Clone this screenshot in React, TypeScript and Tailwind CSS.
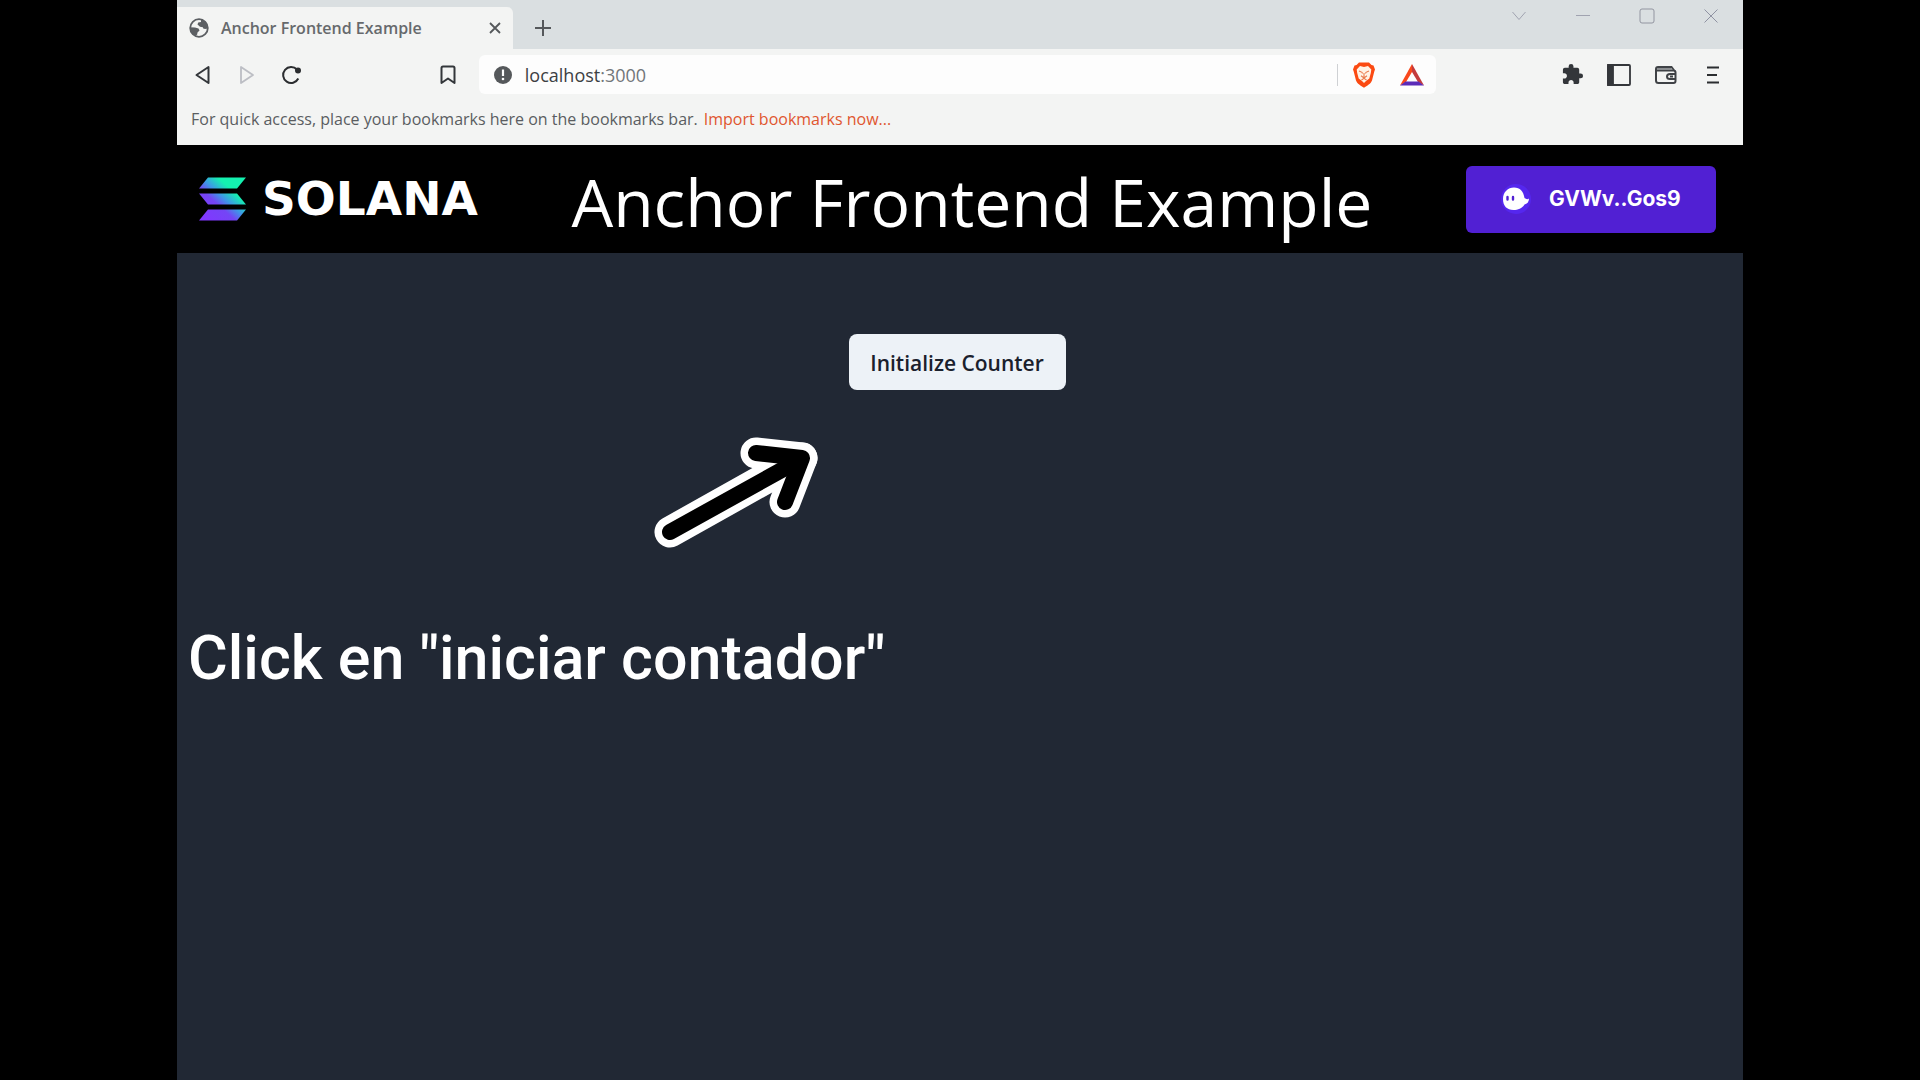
import type { ReactNode } from "react";
import { MdExtension } from "react-icons/md";

function IconButton({ label, className = "", children }: { label: string; className?: string; children: ReactNode }) {
  return (
    <button type="button" aria-label={label} className={`flex h-6 w-6 shrink-0 items-center justify-center ${className}`}>
      {children}
    </button>
  );
}

function GlobeIcon() {
  return (
    <svg width="20" height="20" viewBox="0 0 20 20" className="shrink-0">
      <circle cx="10" cy="10" r="8.8" fill="none" stroke="#5c5f63" strokeWidth="1.8" />
      <path d="M12 1.4C15.5 2 18.3 4.700 18.8 8.500L17.500 11L14.500 10.800L13.800 9.300L11 8.800L8.500 6.500L9.200 4.500L12 4Z" fill="#5c5f63" />
      <path d="M1.200 9.200L6 9.500L9.500 10.500L10.500 12.500L8.500 14.500L8.200 16.500L6.500 17.900C3.500 16.500 1.200 13.500 1.200 9.200Z" fill="#5c5f63" />
    </svg>
  );
}

function TabStrip() {
  return (
    <div className="flex h-[49px] items-start justify-between bg-[#dadfe1]">
      <div className="flex">
        <div className="mt-[7px] flex h-[42px] w-[336px] items-center rounded-tr-md bg-[#f3f4f3] pr-[6px] pl-3">
          <GlobeIcon />
          <span className="ml-3 flex-1 text-[16px] leading-6 font-semibold whitespace-nowrap text-[#66696c]">Anchor Frontend Example</span>
          <IconButton label="Close tab">
            <svg width="12" height="12" viewBox="0 0 12 12" stroke="#55585b" strokeWidth="1.8">
              <path d="M1 1L11 11M11 1L1 11" />
            </svg>
          </IconButton>
        </div>
        <IconButton label="New tab" className="mt-4 ml-[18px]">
          <svg width="16" height="16" viewBox="0 0 16 16" stroke="#55585b" strokeWidth="2">
            <path d="M8 0V16M0 8H16" />
          </svg>
        </IconButton>
      </div>
      <div className="mt-1 mr-5 flex gap-10">
        <IconButton label="Search tabs">
          <svg width="14" height="14" viewBox="0 0 14 14" fill="none" stroke="#a0a3b0">
            <path d="M0.500 3L7 10.500L13.500 3" />
          </svg>
        </IconButton>
        <IconButton label="Minimize">
          <svg width="14" height="14" viewBox="0 0 14 14" stroke="#a0a3b0">
            <path d="M0 6.500H14" />
          </svg>
        </IconButton>
        <IconButton label="Maximize">
          <svg width="16" height="16" viewBox="0 0 16 16" fill="none" stroke="#9295a0">
            <rect x="1" y="1" width="14" height="14" rx="2" />
          </svg>
        </IconButton>
        <IconButton label="Close">
          <svg width="14" height="14" viewBox="0 0 14 14" stroke="#8f92a2">
            <path d="M0.500 0.500L13.500 13.500M13.500 0.500L0.500 13.500" />
          </svg>
        </IconButton>
      </div>
    </div>
  );
}

function BraveIcon() {
  return (
    <svg width="22" height="26" viewBox="0 0 22 26">
      <path d="M6 0.500H16L18.500 3L20.500 3.500L22 7.500L21.300 9.500L19 18.500C18 21.500 14 24 11 25.700C8 24 4 21.500 3 18.500L0.700 9.500L0 7.500L1.500 3.500L3.500 3Z" fill="#fb4a12" />
      <path d="M7 4L11 5L15 4L18.300 7.500L17.800 11L16.300 16.500L13 19L11 21L9 19L5.700 16.500L4.200 11L3.700 7.500Z" fill="#fff3e6" />
      <path d="M6 9L9 10.300L9.500 11.500M16 9L13 10.300L12.500 11.500M11 11V15M8 13.800L11 16L14 13.800M8.500 18L11 16.300L13.500 18" fill="none" stroke="#ea7a4c" strokeWidth="1.100" />
    </svg>
  );
}

function RewardsIcon() {
  return (
    <svg width="24" height="22" viewBox="0 0 24 22">
      <path d="M12 0L0 21.500L6 18L12 8Z" fill="#f9481c" />
      <path d="M12 0L24 21.500L18 18L12 8Z" fill="#c43a3c" />
      <path d="M0 21.500H24L18.500 17.500H5.500Z" fill="#5b2bb8" />
    </svg>
  );
}

function Toolbar() {
  return (
    <div className="flex h-[51px] items-center justify-between pr-[18px] pl-[14px]">
      <div className="flex items-center">
        <IconButton label="Back">
          <svg width="16" height="20" viewBox="0 0 16 20" fill="none" stroke="#33363a" strokeWidth="2" strokeLinejoin="round">
            <path d="M13.500 2V18L1.500 10Z" />
          </svg>
        </IconButton>
        <IconButton label="Forward" className="ml-5">
          <svg width="16" height="20" viewBox="0 0 16 20" fill="none" stroke="#bcbec4" strokeWidth="1.800" strokeLinejoin="round">
            <path d="M2 2V18L14 10Z" />
          </svg>
        </IconButton>
        <IconButton label="Reload" className="ml-5">
          <svg width="22" height="20" viewBox="0 0 22 20" fill="none" stroke="#2b2d30" strokeWidth="2">
            <path d="M17 4.500A8 8 0 1 0 18.300 13.500" />
            <circle cx="18" cy="5.500" r="3" fill="#2b2d30" stroke="none" />
          </svg>
        </IconButton>
      </div>
      <IconButton label="Bookmark this tab" className="ml-auto">
        <svg width="16" height="20" viewBox="0 0 16 20" fill="none" stroke="#33363a" strokeWidth="2" strokeLinejoin="round">
          <path d="M1.500 3Q1.500 1.500 3 1.500H13Q14.500 1.500 14.500 3V18L8 13.500L1.500 18Z" />
        </svg>
      </IconButton>
      <div className="ml-[19px] flex h-[39px] w-[62.4%] items-center rounded-md bg-[#fdfdfd] pr-3 pl-[15px]">
        <svg width="18" height="18" viewBox="0 0 18 18" className="shrink-0">
          <circle cx="9" cy="9" r="9" fill="#55585b" />
          <path d="M9 3.500V10" stroke="#fdfdfd" strokeWidth="2.200" />
          <circle cx="9" cy="13" r="1.300" fill="#fdfdfd" />
        </svg>
        <div className="ml-[13px] flex-1 text-[18px] leading-6 text-[#3c4043]">
          localhost<span className="text-[#72767a]">:3000</span>
        </div>
        <div className="mr-[14px] h-[22px] w-px bg-[#cfd1d4]" />
        <IconButton label="Brave Shields" className="mr-6">
          <BraveIcon />
        </IconButton>
        <IconButton label="Brave Rewards">
          <RewardsIcon />
        </IconButton>
      </div>
      <div className="ml-[124px] flex items-center gap-[23px]">
        <IconButton label="Extensions">
          <MdExtension size={23} color="#33363a" />
        </IconButton>
        <IconButton label="Sidebar">
          <svg width="24" height="22" viewBox="0 0 24 22" fill="none" stroke="#33363a" strokeWidth="1.800">
            <rect x="1" y="1" width="22" height="20" rx="1" />
            <path d="M1 1H6V21H1Z" fill="#33363a" />
          </svg>
        </IconButton>
        <IconButton label="Wallet">
          <svg width="24" height="20" viewBox="0 0 24 20" fill="none" stroke="#3f4246" strokeWidth="2">
            <path d="M2 5V15.500Q2 18 4.500 18H19.500Q21.500 18 21.500 16V7.500Q21.500 5.500 19.500 5.500H2V4Q2 2 4 2H17.500L21 6.500" />
            <path d="M3 3H17L19 5H3Z" fill="#8a8d90" stroke="none" />
            <path d="M22 9H16Q13 9 13 11.500Q13 14 16 14H22M16 11.500H19" />
          </svg>
        </IconButton>
        <IconButton label="Menu">
          <svg width="14" height="18" viewBox="0 0 14 18" stroke="#2b2d30" strokeWidth="2">
            <path d="M1 1.500H13M1 9H11M1 16.500H13" />
          </svg>
        </IconButton>
      </div>
    </div>
  );
}

function SolanaLogo() {
  return (
    <a href="/" className="flex items-center gap-4 text-white" aria-label="Solana">
      <svg width="47" height="44" viewBox="0 0 47 44">
        <defs>
          <linearGradient id="solana" gradientUnits="userSpaceOnUse" x1="42" y1="4" x2="8" y2="42">
            <stop offset="0.250" stopColor="#14f1b0" />
            <stop offset="0.480" stopColor="#3f95e8" />
            <stop offset="0.650" stopColor="#7445f5" />
            <stop offset="1" stopColor="#8038ff" />
          </linearGradient>
        </defs>
        <g fill="url(#solana)">
          <path d="M9 0.500H47L38 11.500H0Z" />
          <path d="M0 16.500H38L47 27.500H9Z" />
          <path d="M9 32.500H47L38 43.500H0Z" />
        </g>
      </svg>
      <span className="font-['DejaVu_Sans',sans-serif] text-[47px] leading-[52px] font-bold">SOLANA</span>
    </a>
  );
}

function WalletButton() {
  return (
    <button
      type="button"
      className="flex h-[67px] w-[250px] items-center gap-[18px] rounded-md bg-[#5120d3] pl-[35px] font-['Inter',sans-serif] text-[21px] font-bold text-white"
    >
      <svg width="30" height="32" viewBox="0 0 30 32">
        <circle cx="15" cy="16" r="15" fill="#5527ee" />
        <path d="M2 16C2 9 7 4.500 13 4.500C19 4.500 22.500 8.500 23.500 15Q26 17 28 15.500C28 19 26 21 23.500 21.500C21 25.500 17 27 12.500 27C6 27 2 23 2 16Z" fill="#fff" />
        <path d="M6.500 14V16.500M12 14V16.500" stroke="#5120d3" strokeWidth="2.400" strokeLinecap="round" />
      </svg>
      GVWv..Gos9
    </button>
  );
}

function PointerArrow() {
  return (
    <svg width="164" height="114" viewBox="0 0 164 114" className="mt-[46px] ml-[477px]" fill="none" strokeLinecap="round" strokeLinejoin="round" aria-hidden="true">
      <g stroke="#fff" strokeWidth="31">
        <path d="M16 96L148 22" />
        <path d="M102 17L148 22L131 66" />
      </g>
      <g stroke="#000" strokeWidth="16">
        <path d="M16 96L144 25" />
        <path d="M102 17L148 22L131 66" />
        <path d="M128 28L142 26L136 38Z" fill="#000" strokeWidth="6" />
      </g>
    </svg>
  );
}

export default function App() {
  return (
    <div className="flex min-h-screen bg-black px-[177px] font-['Open_Sans','Noto_Sans',sans-serif]">
      <div className="flex min-w-0 flex-1 flex-col">
        <div className="bg-[#f3f4f3]">
          <TabStrip />
          <Toolbar />
          <div className="flex h-[45px] items-center gap-[6px] pb-[7px] pl-[14px] text-[16px] whitespace-nowrap text-[#5a5d61]">
            <span>For quick access, place your bookmarks here on the bookmarks bar.</span>
            <a href="#import" className="text-[#e0562f]">Import bookmarks now...</a>
          </div>
        </div>
        <header className="flex h-[108px] items-center justify-between bg-black pr-[27px] pl-[22px]">
          <SolanaLogo />
          <h1 className="pt-1 text-[66px] leading-[96px] whitespace-nowrap text-white">Anchor Frontend Example</h1>
          <WalletButton />
        </header>
        <main className="flex flex-1 flex-col bg-[#212834]">
          <button type="button" className="mt-[81px] mr-[6px] h-14 w-[217px] self-center rounded-lg bg-[#edf2f7] pt-1 text-[21px] font-semibold text-[#1a202c]">
            Initialize Counter
          </button>
          <PointerArrow />
          <p className="mt-[72px] ml-[11px] font-['Roboto',sans-serif] text-[61px] leading-[72px] font-medium text-white">Click en "iniciar contador"</p>
        </main>
      </div>
    </div>
  );
}
